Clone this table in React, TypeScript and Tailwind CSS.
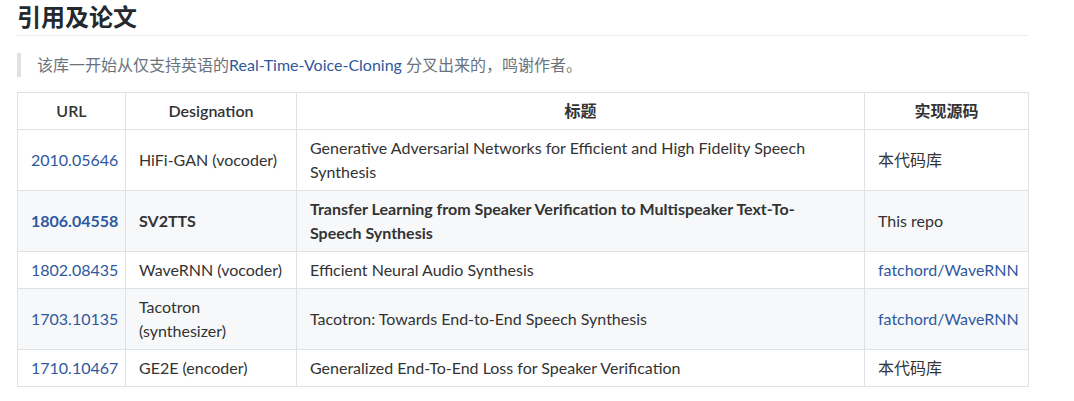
const font = {
  fontFamily: 'Lato, "Noto Sans CJK SC", sans-serif',
};

type Row = {
  url: string;
  name: React.ReactNode;
  title: React.ReactNode;
  code: string;
  codeLink?: boolean;
  bold?: boolean;
};

const rows: Row[] = [
  {
    url: "2010.05646",
    name: "HiFi-GAN (vocoder)",
    title: (
      <>
        Generative Adversarial Networks for Efficient and High Fidelity Speech
        <br />
        Synthesis
      </>
    ),
    code: "本代码库",
  },
  {
    url: "1806.04558",
    name: "SV2TTS",
    title: (
      <>
        Transfer Learning from Speaker Verification to Multispeaker Text-To-
        <br />
        Speech Synthesis
      </>
    ),
    code: "This repo",
    bold: true,
  },
  {
    url: "1802.08435",
    name: "WaveRNN (vocoder)",
    title: "Efficient Neural Audio Synthesis",
    code: "fatchord/WaveRNN",
    codeLink: true,
  },
  {
    url: "1703.10135",
    name: (
      <>
        Tacotron
        <br />
        (synthesizer)
      </>
    ),
    title: "Tacotron: Towards End-to-End Speech Synthesis",
    code: "fatchord/WaveRNN",
    codeLink: true,
  },
  {
    url: "1710.10467",
    name: "GE2E (encoder)",
    title: "Generalized End-To-End Loss for Speaker Verification",
    code: "本代码库",
  },
];

const cell = "border border-[#dfe2e5] px-[13px] py-[6px] whitespace-nowrap";

export default function App() {
  return (
    <div className="bg-white w-[1074px] h-[401px] overflow-hidden" style={font}>
      <div className="ml-[17px] w-[1011px]">
        <h2 className="mt-[2px] text-[24px] leading-[30px] font-bold text-[#24292e] pb-[3px] border-b border-[#eaecef]">
          引用及论文
        </h2>

        <blockquote className="mt-[17px] border-l-4 border-[#dfe2e5] pl-4 text-[16px] leading-[24px] text-[#6a737d]">
          该库一开始从仅支持英语的
          <a className="text-[#2f58a0]">Real-Time-Voice-Cloning</a> 分叉出来的，鸣谢作者。
        </blockquote>

        <table className="mt-[15px] w-[1011px] table-fixed border-collapse text-[16px] leading-[24px] text-[#333]">
          <colgroup>
            <col className="w-[108px]" />
            <col className="w-[171px]" />
            <col className="w-[568px]" />
            <col className="w-[164px]" />
          </colgroup>
          <thead>
            <tr className="bg-white">
              {["URL", "Designation", "标题", "实现源码"].map((h) => (
                <th key={h} className={`${cell} font-semibold text-center`}>
                  {h}
                </th>
              ))}
            </tr>
          </thead>
          <tbody>
            {rows.map((r, i) => (
              <tr
                key={r.url}
                className={`border-t border-[#c6cbd1] ${
                  i % 2 === 1 ? "bg-[#f6f8fa]" : "bg-white"
                } ${r.bold ? "font-bold" : ""}`}
              >
                <td className={cell}>
                  <a className="text-[#2f58a0]">{r.url}</a>
                </td>
                <td className={cell}>{r.name}</td>
                <td className={cell}>{r.title}</td>
                <td className={`${cell} font-normal`}>
                  {r.codeLink ? <a className="text-[#2f58a0]">{r.code}</a> : r.code}
                </td>
              </tr>
            ))}
          </tbody>
        </table>
      </div>
    </div>
  );
}
